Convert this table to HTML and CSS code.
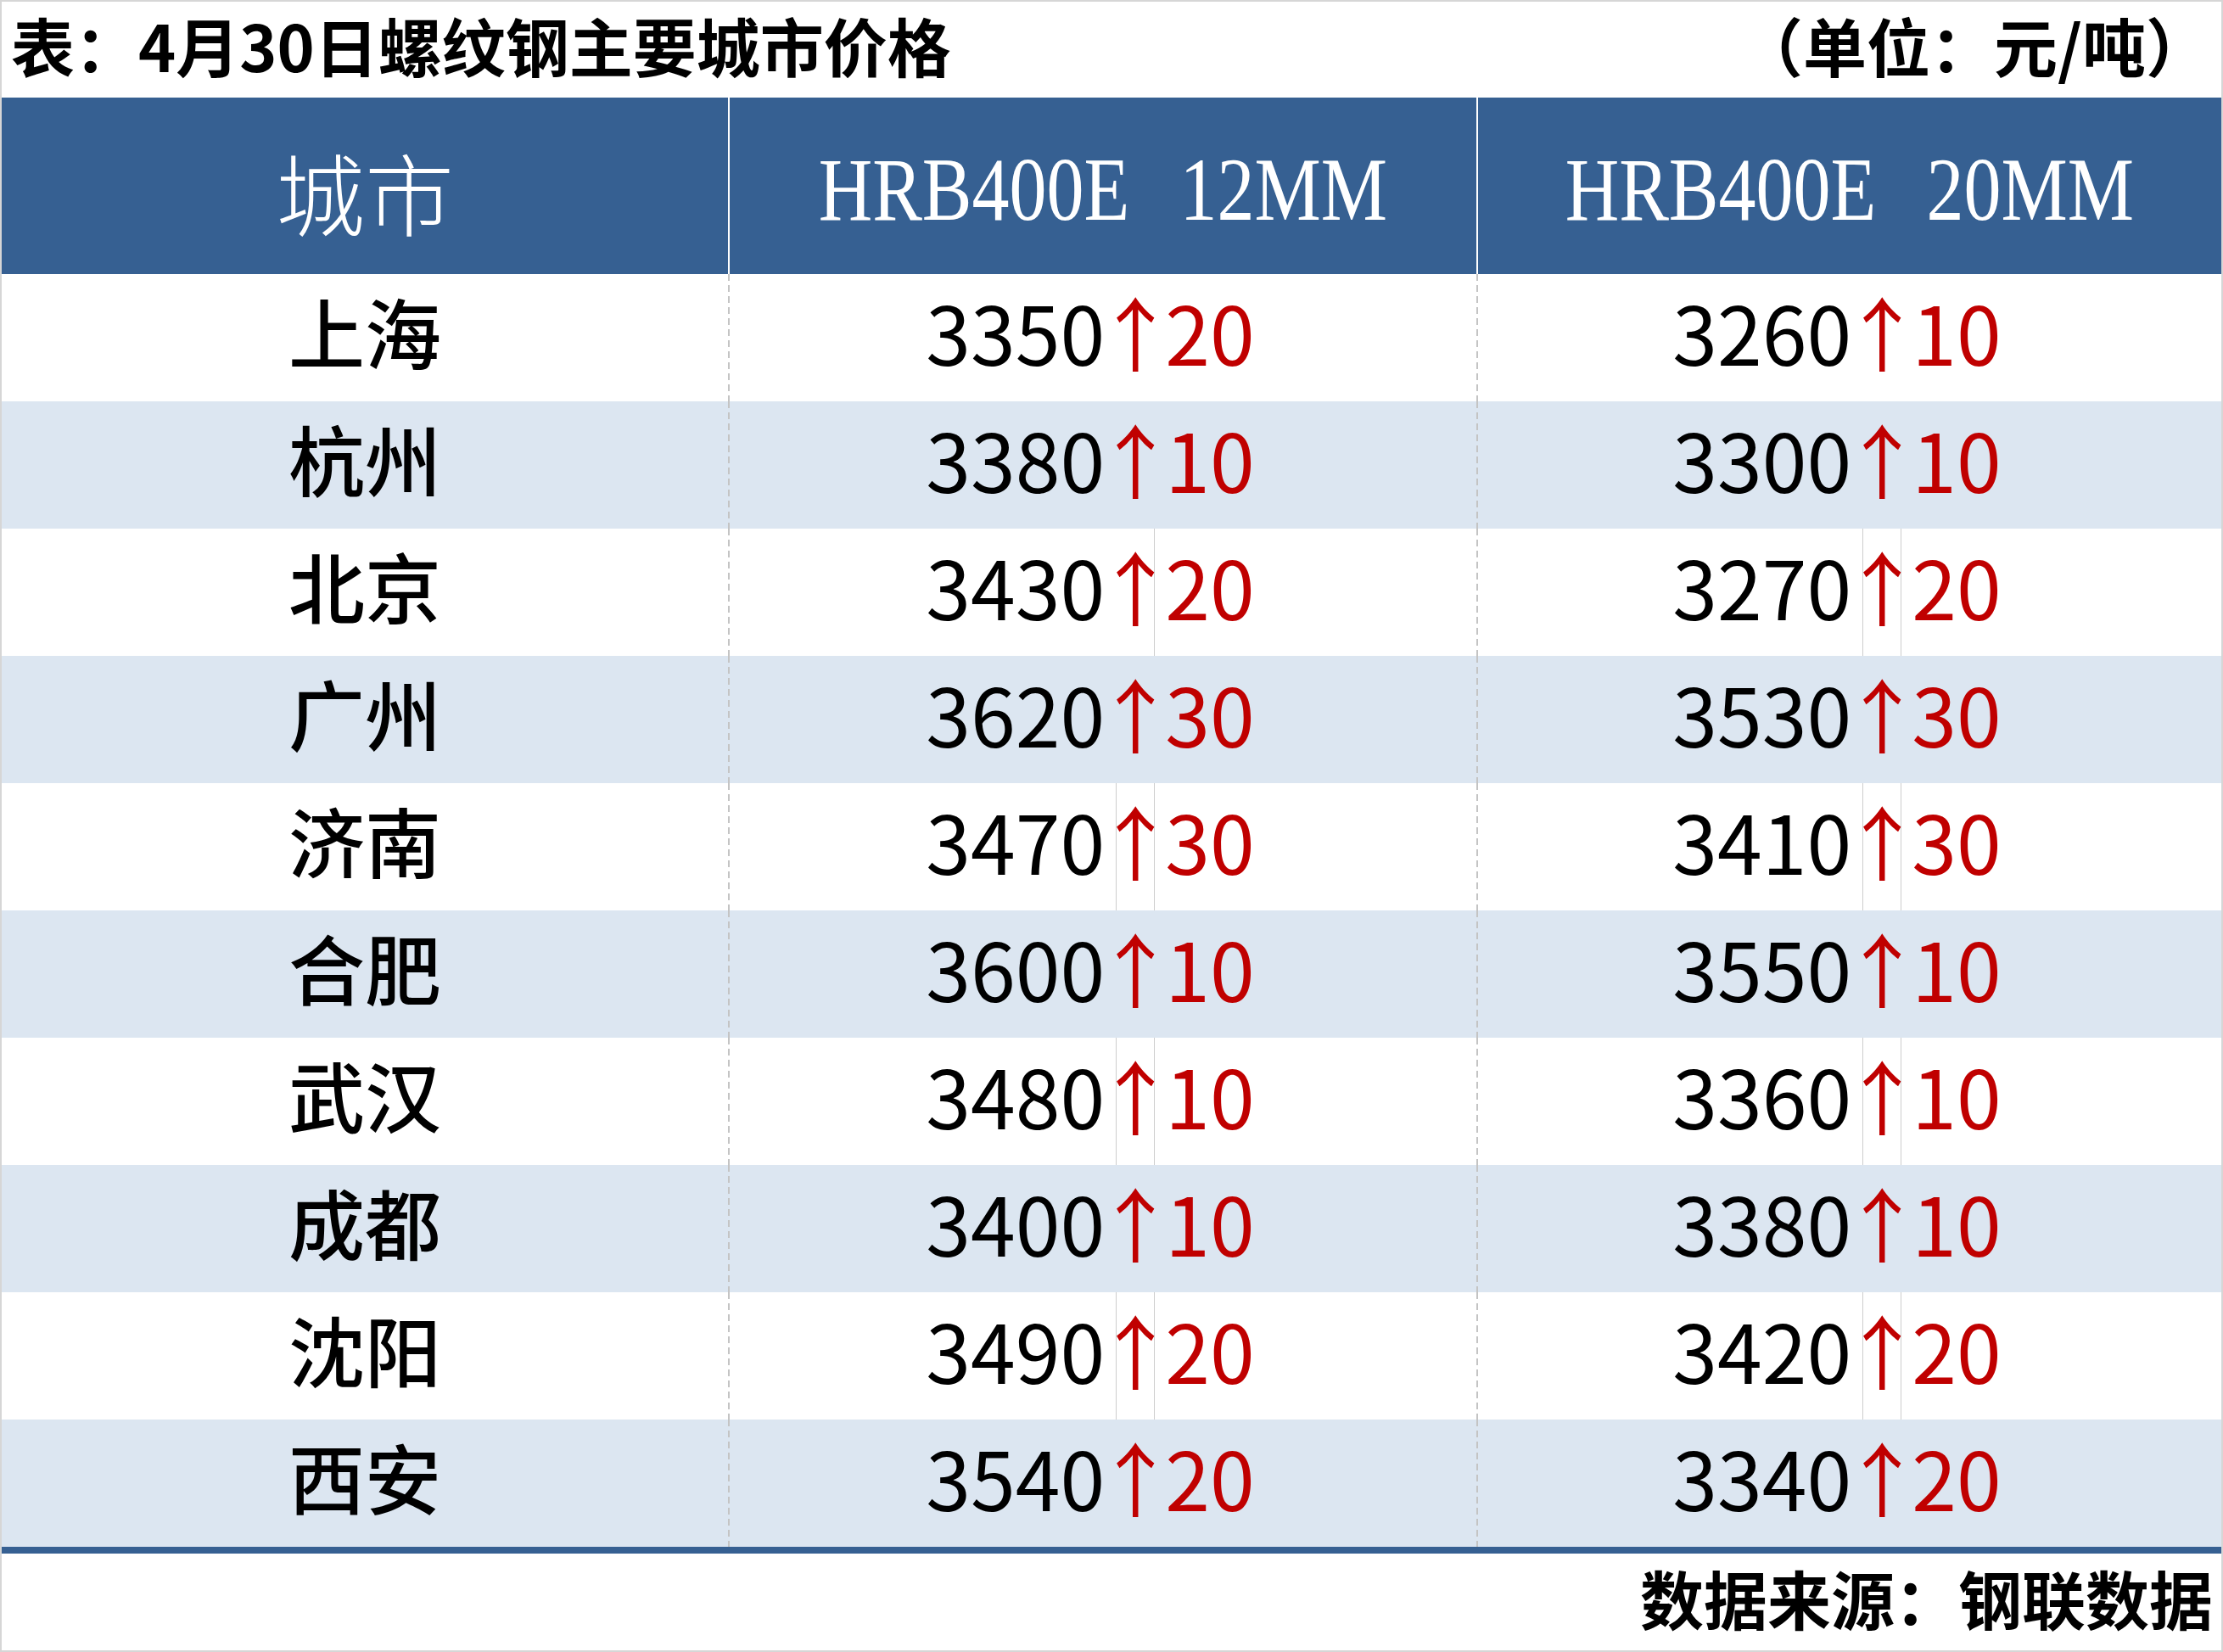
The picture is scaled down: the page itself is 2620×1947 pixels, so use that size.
FILE: index.html
```html
<!DOCTYPE html>
<html lang="zh-CN">
<head>
<meta charset="utf-8">
<title>4月30日螺纹钢主要城市价格</title>
<link rel="stylesheet" href="styles.css">
</head>
<body>
<div class="page">
  <div class="caption">
    <span class="caption-title">表：4月30日螺纹钢主要城市价格</span>
    <span class="caption-unit">（单位：元/吨）</span>
  </div>

  <div class="table">
    <div class="hd hd-city"><span>城市</span></div>
    <div class="hd hd-spec"><span class="spec">HRB400E 12MM</span></div>
    <div class="hd hd-spec"><span class="spec">HRB400E 20MM</span></div>

    <div class="cell city">上海</div>
    <div class="cell val"><span class="num">3350</span><span class="arrow">↑</span><span class="delta">20</span></div>
    <div class="cell val"><span class="num">3260</span><span class="arrow">↑</span><span class="delta">10</span></div>

    <div class="cell city alt">杭州</div>
    <div class="cell val alt"><span class="num">3380</span><span class="arrow">↑</span><span class="delta">10</span></div>
    <div class="cell val alt"><span class="num">3300</span><span class="arrow">↑</span><span class="delta">10</span></div>

    <div class="cell city">北京</div>
    <div class="cell val"><span class="num">3430</span><span class="arrow guide-r">↑</span><span class="delta">20</span></div>
    <div class="cell val"><span class="num">3270</span><span class="arrow guide-l guide-r">↑</span><span class="delta">20</span></div>

    <div class="cell city alt">广州</div>
    <div class="cell val alt"><span class="num">3620</span><span class="arrow">↑</span><span class="delta">30</span></div>
    <div class="cell val alt"><span class="num">3530</span><span class="arrow">↑</span><span class="delta">30</span></div>

    <div class="cell city">济南</div>
    <div class="cell val"><span class="num">3470</span><span class="arrow guide-l guide-r">↑</span><span class="delta">30</span></div>
    <div class="cell val"><span class="num">3410</span><span class="arrow guide-l guide-r">↑</span><span class="delta">30</span></div>

    <div class="cell city alt">合肥</div>
    <div class="cell val alt"><span class="num">3600</span><span class="arrow">↑</span><span class="delta">10</span></div>
    <div class="cell val alt"><span class="num">3550</span><span class="arrow">↑</span><span class="delta">10</span></div>

    <div class="cell city">武汉</div>
    <div class="cell val"><span class="num">3480</span><span class="arrow guide-l guide-r">↑</span><span class="delta">10</span></div>
    <div class="cell val"><span class="num">3360</span><span class="arrow guide-l guide-r">↑</span><span class="delta">10</span></div>

    <div class="cell city alt">成都</div>
    <div class="cell val alt"><span class="num">3400</span><span class="arrow">↑</span><span class="delta">10</span></div>
    <div class="cell val alt"><span class="num">3380</span><span class="arrow">↑</span><span class="delta">10</span></div>

    <div class="cell city">沈阳</div>
    <div class="cell val"><span class="num">3490</span><span class="arrow guide-l guide-r">↑</span><span class="delta">20</span></div>
    <div class="cell val"><span class="num">3420</span><span class="arrow guide-l guide-r">↑</span><span class="delta">20</span></div>

    <div class="cell city alt">西安</div>
    <div class="cell val alt"><span class="num">3540</span><span class="arrow">↑</span><span class="delta">20</span></div>
    <div class="cell val alt"><span class="num">3340</span><span class="arrow">↑</span><span class="delta">20</span></div>
  </div>

  <div class="rule"></div>

  <div class="footer">数据来源：钢联数据</div>
</div>
</body>
</html>
```

FILE: styles.css
```css
* {
  box-sizing: border-box;
}

body {
  margin: 0;
  background: #ffffff;
}

.page {
  width: 2620px;
  height: 1947px;
  border: 2px solid #d6d6d6;
  background: #ffffff;
  display: flex;
  flex-direction: column;
  font-family: "Noto Sans CJK SC", sans-serif;
  color: #000000;
}

/* caption line */
.caption {
  height: 113px;
  flex: none;
  display: flex;
  justify-content: space-between;
  align-items: center;
  padding: 0 14px 12px 11px;
  font-size: 75px;
  font-weight: 700;
  line-height: 1;
  white-space: nowrap;
}

/* table */
.table {
  flex: none;
  display: grid;
  grid-template-columns: 856px 882px 878px;
  grid-template-rows: 208px;
  grid-auto-rows: 150px;
}

.hd {
  background: #366092;
  color: #ffffff;
  display: flex;
  justify-content: center;
  align-items: center;
  padding-top: 10px;
  line-height: 1;
}

.hd + .hd {
  border-left: 2px solid #ffffff;
}

.hd-city {
  font-size: 105px;
  font-weight: 300;
}

.spec {
  display: inline-block;
  font-family: "Liberation Serif", serif;
  font-size: 106px;
  font-weight: 400;
  word-spacing: 45px;
  white-space: nowrap;
  transform: scaleX(0.83);
}

.cell {
  background-color: #ffffff;
  display: flex;
  justify-content: center;
  align-items: stretch;
  line-height: 1;
}

.cell.alt {
  background-color: #dce6f1;
}

.city {
  align-items: center;
  padding-bottom: 18px;
  font-size: 90px;
  font-weight: 500;
}

.val {
  padding-right: 28px;
  font-size: 95px;
  background-image: repeating-linear-gradient(to bottom, #c4c4c4 0 8px, transparent 8px 13px);
  background-size: 2px 100%;
  background-repeat: no-repeat;
  background-position: left top;
}

.num,
.delta,
.arrow {
  display: flex;
  align-items: center;
  padding-bottom: 18px;
}

.delta {
  color: #c00000;
}

.arrow {
  width: 46px;
  justify-content: center;
  margin: 0 12px 0 13px;
  color: #c00000;
  border-left: 1px solid transparent;
  border-right: 1px solid transparent;
}

.arrow.guide-l {
  border-left-color: #cdcdcd;
}

.arrow.guide-r {
  border-right-color: #cdcdcd;
}

/* bottom rule and source line */
.rule {
  flex: none;
  height: 8px;
  background: #366092;
}

.footer {
  flex: 1;
  display: flex;
  justify-content: flex-end;
  align-items: center;
  padding: 0 10px 12px 0;
  font-size: 75px;
  font-weight: 700;
  line-height: 1;
}
```
